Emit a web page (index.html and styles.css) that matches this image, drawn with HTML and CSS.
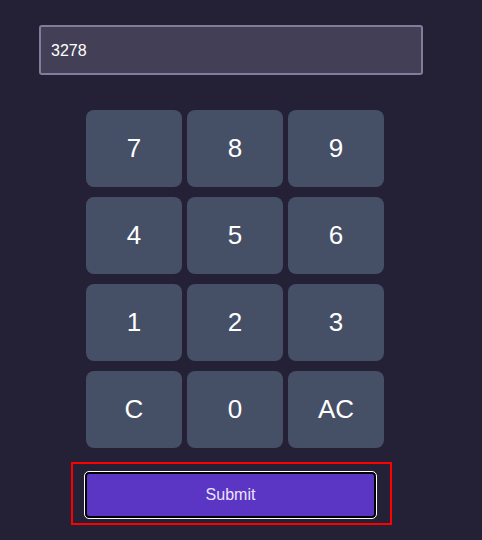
FILE: index.html
```html
<!DOCTYPE html>
<html>
<head>
<meta charset="utf-8">
<link rel="stylesheet" href="styles.css">
</head>
<body>
<div class="app">
  <input class="display" type="text" value="3278" readonly>
  <div class="keypad">
    <button class="key">7</button>
    <button class="key">8</button>
    <button class="key">9</button>
    <button class="key">4</button>
    <button class="key">5</button>
    <button class="key">6</button>
    <button class="key">1</button>
    <button class="key">2</button>
    <button class="key">3</button>
    <button class="key">C</button>
    <button class="key">0</button>
    <button class="key">AC</button>
  </div>
  <div class="submit-wrap">
    <button class="submit">Submit</button>
  </div>
</div>
</body>
</html>
```
FILE: styles.css
```css
html, body {
  margin: 0;
  padding: 0;
  background: #242137;
  height: 100%;
}
body {
  font-family: "Liberation Sans", Arial, sans-serif;
}
.app {
  width: 384px;
  margin-left: 39px;
  padding-top: 25px;
  display: flex;
  flex-direction: column;
}
.display {
  box-sizing: border-box;
  width: 384px;
  height: 50px;
  margin: 0;
  padding: 1px 10px 0 10px;
  border: 2px solid #857b9b;
  border-radius: 3px;
  background: #433f56;
  color: #ffffff;
  font-family: "Liberation Sans", Arial, sans-serif;
  font-size: 16px;
  outline: none;
}
.keypad {
  margin-top: 35px;
  margin-left: 47px;
  width: 298px;
  display: grid;
  grid-template-columns: repeat(3, 96px);
  grid-auto-rows: 77px;
  column-gap: 5px;
  row-gap: 10px;
}
.key {
  margin: 0;
  padding: 0;
  border: none;
  border-radius: 8px;
  background: #454f66;
  color: #ffffff;
  font-family: "Liberation Sans", Arial, sans-serif;
  font-size: 26px;
}
.submit-wrap {
  box-sizing: border-box;
  margin-top: 14px;
  margin-left: 32px;
  width: 321px;
  height: 63px;
  border: 2px solid #ff0000;
  padding: 8px 12px 0 12px;
}
.submit {
  box-sizing: border-box;
  display: block;
  width: 291px;
  height: 46px;
  margin: 0;
  border: 2px solid #000000;
  outline: 1px solid #ffffff;
  outline-offset: 0;
  border-radius: 4px;
  background: #5b35c4;
  color: #ece4fb;
  font-family: "Liberation Sans", Arial, sans-serif;
  font-size: 16px;
}
```
